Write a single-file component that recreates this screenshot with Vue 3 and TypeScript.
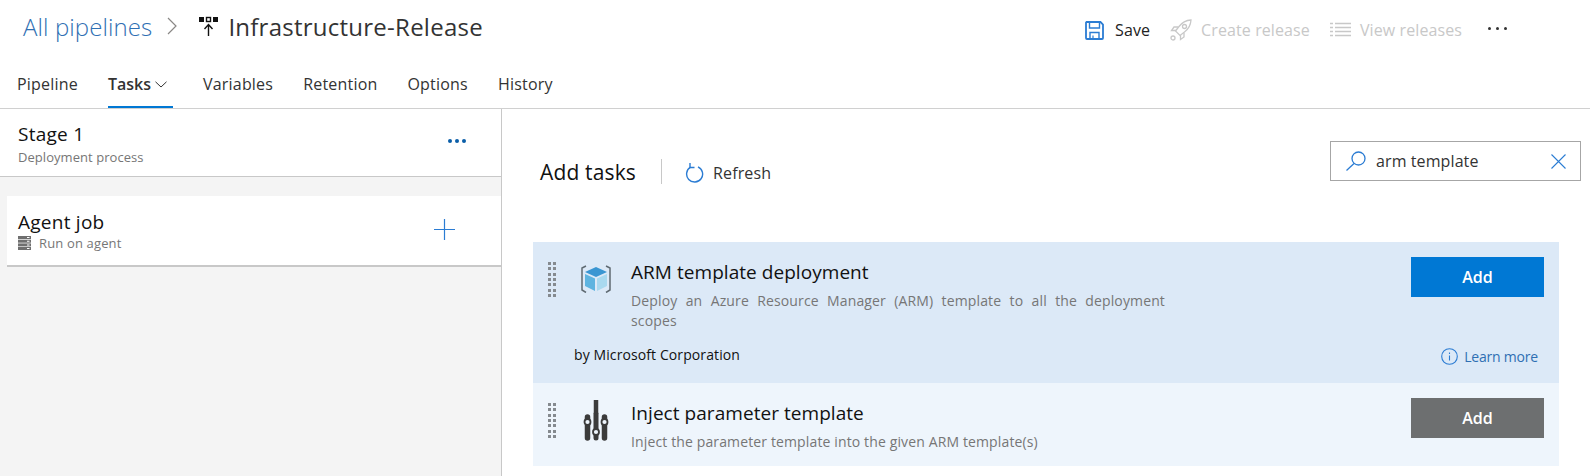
<script setup lang="ts">
const tabs = ['Variables', 'Retention', 'Options', 'History'];
const gripDots: number[] = Array.from({ length: 14 }, (_, i) => i);
</script>

<template>
  <div class="page">
    <header class="top">
      <div class="crumbs">
        <a class="crumb-link">All pipelines</a>
        <svg class="crumb-chev" width="10" height="18" viewBox="0 0 10 18"><path d="M1 1l8 8-8 8" fill="none" stroke="#8a8886" stroke-width="1.2"/></svg>
        <svg class="pipe-icon" width="20" height="20" viewBox="0 0 20 20">
          <rect x="0" y="1" width="5" height="5" fill="#111"/>
          <rect x="7.5" y="1.5" width="4" height="4" fill="#fff" stroke="#111" stroke-width="1.4"/>
          <rect x="14" y="1" width="5" height="5" fill="#111"/>
          <path d="M9.5 20V9M5.5 13l4-4.500 4 4.500" fill="none" stroke="#111" stroke-width="1.4"/>
        </svg>
        <span class="crumb-title">Infrastructure-Release</span>
      </div>
      <div class="actions">
        <svg class="a-save" width="19" height="19" viewBox="0 0 19 19" fill="none" stroke="#2b7cd3" stroke-width="1.8">
          <path d="M1.500 1h14l2.500 2.500V17a1 1 0 0 1-1 1H2a1 1 0 0 1-1-1V1.500z"/>
          <path d="M4.500 1v6h10V1M5 18v-6.500h9V18" stroke-width="1.400"/>
          <path d="M8 14.500v3.500" stroke-width="1.200"/>
        </svg>
        <span class="a-text save">Save</span>
        <svg class="a-rocket" width="22" height="22" viewBox="0 0 22 22" fill="none" stroke="#c8c8c8" stroke-width="1.300">
          <path d="M21 1c-5 .3-9 2.500-12 6.500L5.500 12l4.500 4.500 4.500-3.500C18.500 10 20.700 6 21 1z"/>
          <circle cx="14.500" cy="7.500" r="2"/>
          <path d="M8 8H4L1.500 11.500H6M14 14v4l-3.500 2.500V16"/>
          <circle cx="3" cy="19" r="2"/>
        </svg>
        <span class="a-text muted create">Create release</span>
        <svg class="a-list" width="21" height="16" viewBox="0 0 21 16" stroke="#c8c8c8" stroke-width="1.300">
          <path d="M5 1.500h16M5 5.500h16M5 9.500h16M5 13.500h16M0 1.500h3M0 5.500h3M0 9.500h3M0 13.500h3"/>
        </svg>
        <span class="a-text muted">View releases</span>
        <span class="a-more"><i></i><i></i><i></i></span>
      </div>
    </header>

    <nav class="tabs">
      <span class="tab">Pipeline</span>
      <span class="tab active">
        Tasks
        <svg width="12" height="7" viewBox="0 0 12 7"><path d="M.5.800L6 6l5.500-5.200" fill="none" stroke="#333" stroke-width="1"/></svg>
      </span>
      <span v-for="t in tabs" :key="t" class="tab">{{ t }}</span>
    </nav>

    <main class="body">
      <aside class="left">
        <section class="stage">
          <div>
            <div class="l-title">Stage 1</div>
            <div class="l-sub stage-sub">Deployment process</div>
          </div>
          <span class="stage-more"><i></i><i></i><i></i></span>
        </section>
        <section class="job">
          <div>
            <div class="l-title">Agent job</div>
            <div class="l-sub job-sub">
              <svg width="13" height="14" viewBox="0 0 13 14" fill="#6f6f6f">
                <rect width="13" height="3" y="0"/><rect width="13" height="3" y="3.700"/><rect width="13" height="3" y="7.400"/><rect width="13" height="3" y="11"/>
                <path d="M9 1h2.500v1H9zM9 4.700h2.500v1H9zM9 8.400h2.500v1H9zM9 12h2.500v1H9z" fill="#fff"/>
              </svg>
              Run on agent
            </div>
          </div>
          <svg class="plus" width="21" height="21" viewBox="0 0 21 21"><path d="M10.500 0v21M0 10.500h21" stroke="#2b7cd3" stroke-width="1.200"/></svg>
        </section>
      </aside>

      <section class="right">
        <div class="toolbar">
          <h2 class="add-title">Add tasks</h2>
          <span class="sep"></span>
          <svg class="refresh-icon" width="19" height="20" viewBox="0 0 19 20" fill="none" stroke="#2b7cd3" stroke-width="1.400">
            <path d="M5.500 4.200A8 8 0 1 0 13 3.800"/>
            <path d="M5 .5v4.500h4.500" transform="translate(0 -.5)"/>
          </svg>
          <span class="refresh">Refresh</span>
          <div class="search">
            <svg width="20" height="20" viewBox="0 0 20 20" fill="none" stroke="#2b7cd3" stroke-width="1.300">
              <circle cx="12.500" cy="7.500" r="6.500"/><path d="M8 12.500L.5 19.500"/>
            </svg>
            <span class="search-text">arm template</span>
            <svg class="clear" width="15" height="15" viewBox="0 0 15 15"><path d="M.5.500l14 14M14.500.500l-14 14" stroke="#2b7cd3" stroke-width="1.100"/></svg>
          </div>
        </div>

        <article class="task selected">
          <div class="task-main">
            <span class="grip"><i v-for="d in gripDots" :key="d"></i></span>
            <svg class="t-icon" width="30" height="28" viewBox="0 0 30 28">
              <path d="M5 1L1 3v22l4 2.500M25 1l4 2v22l-4 2.500" fill="none" stroke="#5f6a72" stroke-width="1.500"/>
              <path d="M15 2L26 7 15 12 4 7z" fill="#3a96d2"/>
              <path d="M4 9l10 4.500V26L4 21z" fill="#5eb4e0"/>
              <path d="M26 9l-10 4.500V26l10-5z" fill="#a9d9ef"/>
            </svg>
            <div class="t-text">
              <div class="t-name">ARM template deployment</div>
              <p class="t-desc just">Deploy an Azure Resource Manager (ARM) template to all the deployment scopes</p>
            </div>
            <button class="add blue">Add</button>
          </div>
          <div class="task-foot">
            <span class="by">by Microsoft Corporation</span>
            <span class="learn">
              <svg width="17" height="17" viewBox="0 0 17 17" fill="none" stroke="#2b7cd3" stroke-width="1.100">
                <circle cx="8.500" cy="8.500" r="7.800"/><path d="M8.500 7.500v5M8.500 4.500v1.400"/>
              </svg>
              Learn more
            </span>
          </div>
        </article>

        <article class="task second">
          <div class="task-main">
            <span class="grip"><i v-for="d in gripDots" :key="d"></i></span>
            <svg class="t-icon inj" width="26" height="41" viewBox="0 0 26 41" fill="none" stroke="#3b3b3b" stroke-linecap="round">
              <path d="M13 0v14" stroke-width="4.500" stroke-linecap="butt"/>
              <path d="M13 14v24" stroke-width="5"/>
              <path d="M4.500 17v21M21.500 17v21" stroke-width="5.500"/>
              <circle cx="4.500" cy="22" r="3" fill="#eef5fc" stroke-width="1.800"/>
              <circle cx="13" cy="32" r="3" fill="#eef5fc" stroke-width="1.800"/>
              <circle cx="21.500" cy="22" r="3" fill="#eef5fc" stroke-width="1.800"/>
            </svg>
            <div class="t-text">
              <div class="t-name">Inject parameter template</div>
              <p class="t-desc">Inject the parameter template into the given ARM template(s)</p>
            </div>
            <button class="add gray">Add</button>
          </div>
        </article>
      </section>
    </main>
  </div>
</template>

<style scoped>
.page {
  width: 1590px;
  height: 476px;
  overflow: hidden;
  background: #fff;
  color: #111;
  font-family: "Open Sans", "Noto Sans", sans-serif;
}
.top {
  height: 62px;
  box-sizing: border-box;
  display: flex;
  align-items: center;
  padding: 0 83px 10px 23px;
}
.crumbs { display: flex; align-items: center; }
.crumb-link { font-size: 24px; font-weight: 300; color: #2f6fb3; letter-spacing: 0.1px; }
.crumb-chev { margin-left: 15px; }
.pipe-icon { margin-left: 22px; }
.crumb-title { margin-left: 9px; font-size: 24px; color: #333; letter-spacing: 0.25px; }
.actions { margin-left: auto; margin-top: 8px; display: flex; align-items: center; }
.a-text { font-size: 16px; letter-spacing: 0.1px; }
.save { margin-left: 11px; color: #222; }
.a-rocket { margin-left: 20px; }
.muted { color: #c8c8c8; }
.create { margin-left: 9px; }
.a-list { margin-left: 20px; margin-right: 9px; }
.a-more { display: flex; gap: 5px; margin-left: 26px; margin-bottom: 4px; }
.a-more i { width: 3px; height: 3px; border-radius: 50%; background: #333; }

.tabs {
  height: 47px;
  display: flex;
  align-items: flex-start;
  padding-left: 17px;
  border-bottom: 1px solid #d0d0d0;
  box-sizing: border-box;
  gap: 30px;
}
.tab {
  height: 46px;
  display: flex;
  align-items: center;
  gap: 4px;
  padding-bottom: 2px;
  font-size: 16px;
  letter-spacing: 0.2px;
  color: #333;
  box-sizing: border-box;
}
.tab.active {
  font-weight: 600;
  letter-spacing: 0;
  border-bottom: 2px solid #0078d4;
  padding-bottom: 0;
  padding-right: 6px;
}

.body {
  display: grid;
  grid-template-columns: 502px 1fr;
  height: 367px;
}
.left {
  background: #f4f4f4;
  border-right: 1px solid #c8c8c8;
}
.stage {
  height: 68px;
  background: #fff;
  border-bottom: 1px solid #c8c8c8;
  box-sizing: border-box;
  display: flex;
  align-items: flex-start;
  justify-content: space-between;
  padding: 13px 35px 0 18px;
}
.l-title { font-size: 19px; line-height: 24px; letter-spacing: 0.25px; color: #111; }
.l-sub { font-size: 13px; line-height: 18px; color: #767676; letter-spacing: 0.05px; }
.stage-sub { margin-top: 2px; }
.stage-more { display: flex; gap: 3px; margin-top: 17px; }
.stage-more i { width: 4px; height: 4px; border-radius: 50%; background: #0a5ea8; }
.job {
  margin: 19px 0 0 7px;
  height: 71px;
  background: #fff;
  border-bottom: 2px solid #c8c8c8;
  box-sizing: border-box;
  display: flex;
  align-items: flex-start;
  justify-content: space-between;
  padding: 14px 46px 0 11px;
}
.job-sub { display: flex; align-items: center; gap: 8px; letter-spacing: 0.15px; }
.plus { margin-top: 9px; }

.right { padding: 0 30px 0 31px; }
.toolbar {
  height: 133px;
  display: flex;
  align-items: flex-start;
  padding-left: 7px;
  box-sizing: border-box;
}
.add-title { margin: 49px 0 0; font-size: 21px; line-height: 28px; font-weight: 400; letter-spacing: 0.15px; color: #111; }
.sep { width: 1px; height: 25px; margin: 50px 0 0 25px; background: #c8c8c8; }
.refresh-icon { margin: 54px 0 0 23px; }
.refresh { margin: 52px 0 0 9px; font-size: 16px; line-height: 24px; letter-spacing: 0.15px; color: #333; }
.search {
  width: 251px;
  height: 40px;
  box-sizing: border-box;
  margin: 32px -21px 0 auto;
  border: 1px solid #a6a6a6;
  display: flex;
  align-items: center;
  padding: 0 14px 0 15px;
}
.search-text { margin-left: 10px; font-size: 16px; letter-spacing: 0.1px; color: #333; }
.clear { margin-left: auto; }

.task { width: 1026px; box-sizing: border-box; padding: 0 15px 0 15px; }
.selected { height: 141px; background: #dce9f7; }
.second { height: 83px; background: #eef5fc; }
.task-main { display: flex; align-items: flex-start; }
.grip {
  width: 9px;
  margin-top: 20px;
  flex: none;
  display: grid;
  grid-template-columns: 3px 3px;
  gap: 2.330px 2.400px;
}
.grip i { width: 3px; height: 3px; background: #858a8f; }
.t-icon { margin: 23px 0 0 24px; flex: none; }
.t-icon.inj { margin: 17px 0 0 26px; }
.t-text { margin-left: 20px; width: 534px; padding-top: 17px; }
.t-icon.inj + .t-text { margin-left: 22px; }
.t-name { font-size: 19px; line-height: 26px; letter-spacing: 0.05px; color: #111; }
.t-desc { margin: 6px 0 0; font-size: 14px; line-height: 20px; letter-spacing: 0.13px; color: #767676; }
.just { text-align: justify; }
.add {
  margin: 15px 0 0 auto;
  width: 133px;
  height: 40px;
  border: 0;
  color: #fff;
  font: 600 16px "Open Sans", sans-serif;
  letter-spacing: 0;
}
.blue { background: #0078d4; }
.gray { background: #6d6f70; }
.task-foot {
  display: flex;
  align-items: flex-start;
  justify-content: space-between;
  margin: 14px 6px 0 26px;
}
.by { font-size: 14px; line-height: 20px; letter-spacing: 0.1px; color: #111; }
.learn { display: flex; align-items: center; gap: 6px; margin-top: 2px; font-size: 14px; letter-spacing: -0.2px; color: #2f6fb3; }
</style>
